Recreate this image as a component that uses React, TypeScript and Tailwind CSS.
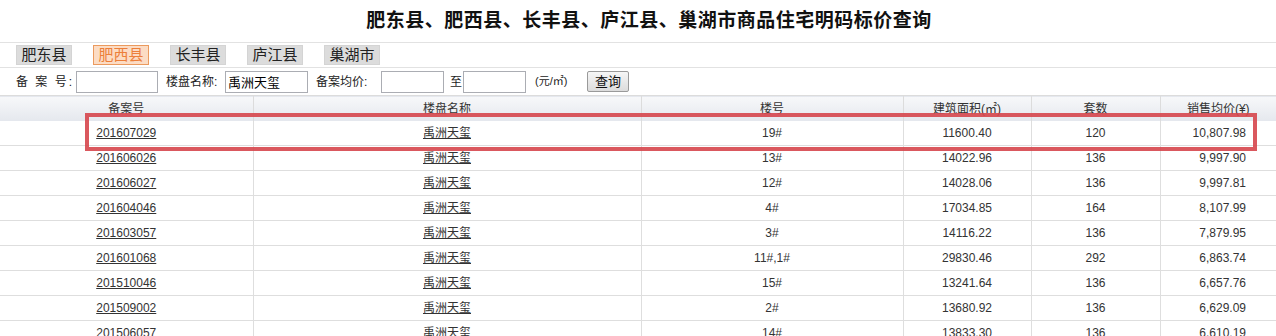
const tabs = ['肥东县', '肥西县', '长丰县', '庐江县', '巢湖市'];

const rows = [
  ['201607029', '19#', '11600.40', '120', '10,807.98'],
  ['201606026', '13#', '14022.96', '136', '9,997.90'],
  ['201606027', '12#', '14028.06', '136', '9,997.81'],
  ['201604046', '4#', '17034.85', '164', '8,107.99'],
  ['201603057', '3#', '14116.22', '136', '7,879.95'],
  ['201601068', '11#,1#', '29830.46', '292', '6,863.74'],
  ['201510046', '15#', '13241.64', '136', '6,657.76'],
  ['201509002', '2#', '13680.92', '136', '6,629.09'],
  ['201506057', '14#', '13833.30', '136', '6,610.19'],
];

const font = { fontFamily: '"Liberation Sans", "Noto Sans CJK SC", sans-serif' };

export default function App() {
  return (
    <div className="relative h-[336px] w-[1276px] overflow-hidden bg-white text-[12px] text-[#333]" style={font}>
      {/* 标题 */}
      <div className="flex h-[43px] items-center justify-center border-b border-[#e2e2e2] pl-[22px] pt-[1px]">
        <h1 className="text-[19px] font-bold tracking-[0.5px] text-[#111]">
          肥东县、肥西县、长丰县、庐江县、巢湖市商品住宅明码标价查询
        </h1>
      </div>

      {/* 区县切换 */}
      <div className="flex h-[25px] items-center gap-[21px] border-b border-[#e2e2e2] pl-[16px]">
        {tabs.map((t, i) => (
          <span
            key={t}
            className={
              i === 1
                ? 'flex h-[20px] w-[56px] items-center justify-center border border-[#eb9a5e] bg-[#fcdcc4] text-[15px] text-[#ec7f3a]'
                : 'flex h-[20px] w-[56px] items-center justify-center border border-[#d4d4d4] bg-[#dcdcdc] text-[15px] text-[#222]'
            }
          >
            {t}
          </span>
        ))}
      </div>

      {/* 查询条件 */}
      <div className="flex h-[27px] items-center pl-[16px] text-[12px] text-[#222]">
        <span className="w-[60px] tracking-[2px]">备 案 号:</span>
        <input className="h-[22px] w-[82px] border border-[#abadb3] bg-white" readOnly />
        <span className="ml-[8px] w-[59px]">楼盘名称:</span>
        <input
          className="h-[22px] w-[83px] border border-[#abadb3] bg-white px-[2px] text-[13px] text-black"
          value="禹洲天玺"
          readOnly
        />
        <span className="ml-[8px] w-[65px]">备案均价:</span>
        <input className="h-[22px] w-[63px] border border-[#abadb3] bg-white" readOnly />
        <span className="ml-[6px] w-[13px]">至</span>
        <input className="h-[22px] w-[63px] border border-[#abadb3] bg-white" readOnly />
        <span className="ml-[9px] w-[52px] text-[11px]">(元/㎡)</span>
        <button className="h-[21px] w-[42px] rounded-[2px] border border-[#9a9a9a] bg-gradient-to-b from-[#f6f6f6] to-[#dcdcdc] text-[13px] text-[#111]">
          查询
        </button>
      </div>

      {/* 结果表 */}
      <table className="w-[1276px] table-fixed border-collapse">
        <colgroup>
          <col className="w-[253px]" />
          <col className="w-[388px]" />
          <col className="w-[262px]" />
          <col className="w-[128px]" />
          <col className="w-[129px]" />
          <col className="w-[116px]" />
        </colgroup>
        <thead>
          <tr className="h-[25px] border-t border-[#dcdcdc] bg-gradient-to-b from-[#f7f8fa] to-[#e5e8ee]">
            {['备案号', '楼盘名称', '楼号', '建筑面积(㎡)', '套数', '销售均价(¥)'].map((h, i) => (
              <th key={h} className={`p-0 pt-[2px] text-center font-normal text-[#333] ${i < 5 ? 'border-r border-[#dcdcdc]' : ''}`}>
                {h}
              </th>
            ))}
          </tr>
        </thead>
        <tbody>
          {rows.map((r) => (
            <tr key={r[0]} className="h-[25px] border-b border-[#dedede]">
              <td className="border-r border-[#dedede] p-0 text-center">
                <a className="underline">{r[0]}</a>
              </td>
              <td className="border-r border-[#dedede] p-0 text-center">
                <a className="underline">禹洲天玺</a>
              </td>
              <td className="border-r border-[#dedede] p-0 text-center">{r[1]}</td>
              <td className="border-r border-[#dedede] p-0 text-center">{r[2]}</td>
              <td className="border-r border-[#dedede] p-0 text-center">{r[3]}</td>
              <td className="p-0 pr-[30px] text-right">{r[4]}</td>
            </tr>
          ))}
        </tbody>
      </table>

      {/* 红框标注 */}
      <div className="pointer-events-none absolute left-[85px] top-[113px] h-[38px] w-[1172px] border-[4px] border-[#d6464c]/90" />
    </div>
  );
}
